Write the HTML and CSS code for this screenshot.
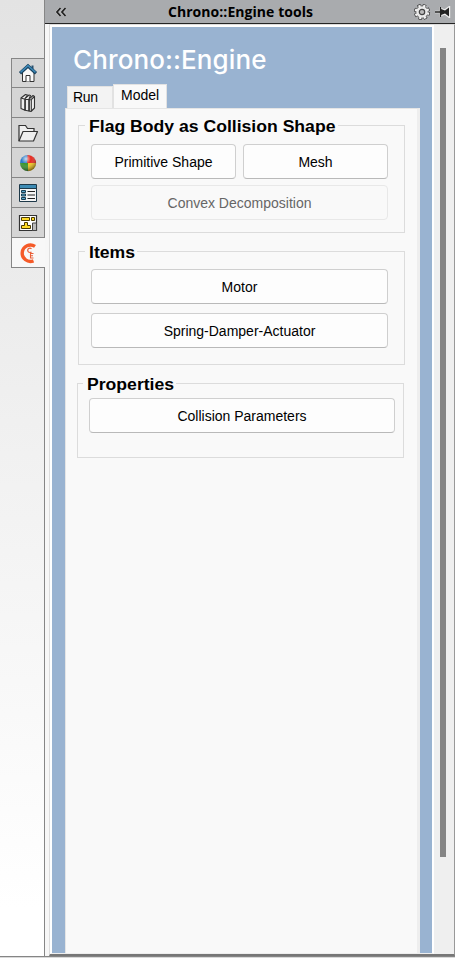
FILE: index.html
```html
<!DOCTYPE html>
<html lang="en">
<head>
<meta charset="utf-8">
<title>Chrono::Engine tools</title>
<link rel="stylesheet" href="styles.css">
</head>
<body>
<div class="window">
  <nav class="rail">
    <div class="rail-item"><svg width="20" height="20" viewBox="0 0 20 20"><path d="M4.500 9v9.500h11.500V9L10 4z" fill="#f8f8f8" stroke="#333"/><path d="M8 18.500v-6h4v6" fill="#fff" stroke="#333"/><path d="M13.500 2.500h2v4h-2z" fill="#2a5270"/><path d="M2 10.200 10 3l8 7.200" fill="none" stroke="#173f5c" stroke-width="3.200"/><path d="M2.500 9.300 10 2.600l7.500 6.700" fill="none" stroke="#3c86b4" stroke-width="1.600"/></svg></div>
    <div class="rail-item"><svg width="20" height="20" viewBox="0 0 20 20"><g fill="#eee" stroke="#333" stroke-width="1.100" stroke-linejoin="round"><path d="M11 6l4-3.500 1.500 1V15L13 18.500l-2-.5z"/><path d="M7 5.500 11 2l1.500.5L11 6v12l-4-.8z"/><path d="M3 5 7.500 1.500 9.500 2 7 5.500v11.700L3 15.500z"/><path d="M3 5l4 1.200 4 .3 2.500.5M7 5.500V17M11 6v12M13.300 6.500V18M13.300 6.500l3.200-3"/></g></svg></div>
    <div class="rail-item"><svg width="22" height="20" viewBox="0 0 22 20"><path d="M2 18V2.500h6.500l2 3H17v3" fill="#eee" stroke="#333" stroke-width="1.200"/><path d="M2 18 6 8.500h14.500L16.500 18z" fill="#eee" stroke="#333" stroke-width="1.200" stroke-linejoin="round"/></svg></div>
    <div class="rail-item"><svg width="20" height="20" viewBox="0 0 20 20"><defs><radialGradient id="shine" cx=".38" cy=".25" r=".75"><stop offset="0" stop-color="#fff" stop-opacity=".75"/><stop offset=".4" stop-color="#fff" stop-opacity="0"/><stop offset="1" stop-color="#000" stop-opacity=".5"/></radialGradient></defs><path d="M10 10.500 2 10A8 8 0 0 1 10 2z" fill="#2877c4"/><path d="M9 10.500 9.500 2A8 8 0 0 1 18 11z" fill="#e52a20"/><path d="M9 10h9a8 8 0 0 1-8 8z" fill="#f5c51c"/><path d="M10 10v8a8 8 0 0 1-8-8z" fill="#37942c"/><circle cx="10" cy="10" r="8.200" fill="url(#shine)"/></svg></div>
    <div class="rail-item"><svg width="20" height="20" viewBox="0 0 20 20"><path d="M1.500 1.500h17v17h-17z" fill="#f5f5f5" stroke="#1e3949"/><path d="M2 2h16v3H2z" fill="#3d8bb4"/><path d="M1 5.500h18" stroke="#1e3949"/><path d="M3.500 7.500h4v2h-4zM3.500 11h4v2h-4zM3.500 14.500h4v2h-4z" fill="#58a5ca" stroke="#173c50"/><path d="M9.500 8.500H17M9.500 12H17M9.500 15.500H17" stroke="#222" stroke-width="1.200"/></svg></div>
    <div class="rail-item"><svg width="20" height="20" viewBox="0 0 20 20"><path d="M1.500 2.500h17v15h-17z" fill="#fff" stroke="#333" stroke-width="1.200"/><path d="M3.500 4.500h8v3h-8zM13.500 4.500h3v3h-3zM6.500 9.500h3v3h3v3h-9v-3h3z" fill="#ffdb27" stroke="#4b3b00"/><path d="M14.500 10h4v7.500h-4z" fill="#bbb" stroke="#444"/></svg></div>
    <div class="rail-item rail-active"><svg width="20" height="22" viewBox="0 0 20 22"><path d="M16 4.400A8.200 8.200 0 1 0 14.500 18.800" fill="none" stroke="#f55a28" stroke-width="3.400"/><path d="M12.500 6.800a2.200 2.200 0 1 0 0 3" fill="none" stroke="#e95f38" stroke-width="1.200"/><path d="M14.500 11.500H11.500v4.500h3M11.500 13.800h2.500" fill="none" stroke="#e95f38" stroke-width="1.100"/></svg></div>
  </nav>
  <main class="dock">
    <header class="titlebar">
      <svg class="collapse" width="12" height="10" viewBox="0 0 12 10"><path d="M5.500 1 2 5l3.500 4M10.500 1 7 5l3.500 4" fill="none" stroke="#eee" stroke-width="3" opacity=".35"/><path d="M5.500 1 2 5l3.500 4M10.500 1 7 5l3.500 4" fill="none" stroke="#222" stroke-width="1.800"/></svg>
      <h1 class="title">Chrono::Engine tools</h1>
      <svg class="gear" width="18" height="18" viewBox="0 0 18 18"><circle cx="9" cy="9" r="6.500" fill="none" stroke="#333" stroke-width="3.200" stroke-dasharray="3.100 2.005"/><circle cx="9" cy="9" r="6.200" fill="#e9e9e9" stroke="#444" stroke-width=".8"/><circle cx="9" cy="9" r="6.300" fill="none" stroke="#f2f2f2" stroke-width="2.200" stroke-dasharray="2.200 2.748" stroke-dashoffset="-.5"/><circle cx="9" cy="9" r="2.700" fill="#bbb" stroke="#444" stroke-width="1.200"/></svg>
      <svg class="pin" width="18" height="12" viewBox="0 0 18 12"><path d="M1 6h6M6.500 1v10M7 3l4 1.500 4-3v9l-4-3L7 9z" fill="#222" stroke="#eee" stroke-width="2.400"/><path d="M1 6h6M6.500 1v10" stroke="#222" stroke-width="1.400"/><path d="M7 3l4 1.500 4-3v9l-4-3L7 9z" fill="#222"/></svg>
    </header>
    <div class="content">
      <div class="panel">
        <h2 class="brand">Chrono::Engine</h2>
        <div class="tabs"><div class="tab">Run</div><div class="tab tab-active">Model</div></div>
        <div class="page">
          <section class="group flags">
            <h3 class="legend"><span>Flag Body as Collision Shape</span></h3>
            <div class="row"><button>Primitive Shape</button><button>Mesh</button></div>
            <button disabled>Convex Decomposition</button>
          </section>
          <section class="group items">
            <h3 class="legend"><span>Items</span></h3>
            <button>Motor</button>
            <button>Spring-Damper-Actuator</button>
          </section>
          <section class="group properties">
            <h3 class="legend"><span>Properties</span></h3>
            <button>Collision Parameters</button>
          </section>
        </div>
      </div>
      <div class="scroll"><div class="thumb"></div></div>
    </div>
  </main>
</div>
</body>
</html>
```
FILE: styles.css
```css
* { box-sizing: border-box; }
body { margin: 0; background: #d9d9d9; }
.window {
  display: flex;
  width: 455px;
  height: 957px;
  border-bottom: 1px solid #858585;
  font-family: "Liberation Sans", sans-serif;
  color: #000;
}
.rail {
  width: 45px;
  padding: 58px 0 0 11px;
  background: linear-gradient(#e3e3e3, #fff 95%);
  border-right: 1px solid #868686;
}
.rail-item {
  height: 30px;
  display: flex;
  align-items: center;
  justify-content: center;
  background: #d5d5d5;
  border: 1px solid #868686;
  border-width: 1px 0 0 1px;
}
.rail-item:first-child { height: 29px; }
.rail-active {
  width: 34px;
  height: 31px;
  background: #f8f8f8;
  border-bottom-width: 1px;
}
.dock { width: 410px; display: flex; flex-direction: column; }
.titlebar {
  height: 24px;
  flex: none;
  display: flex;
  align-items: center;
  padding: 0 3px 0 10px;
  background: #a9abae;
  border-bottom: 1px solid #242424;
}
.title {
  flex: 1;
  margin: 0 0 0 1px;
  text-align: center;
  font: bold 14px/22px "Open Sans", sans-serif;
  letter-spacing: .06px;
}
.gear { margin-right: 3px; }
.content {
  flex: 1;
  min-height: 0;
  display: flex;
  margin-left: 4px;
  border: 1px solid #ddd;
  border-right-color: #999;
  border-bottom: 2px solid #777;
  background: #efefef;
  box-shadow: -4px 0 #f7f7f7;
}
.panel {
  width: 384px;
  display: flex;
  flex-direction: column;
  padding: 0 13px;
  border: 2px solid #fff;
  border-bottom: 1px solid #eee;
  background: #99b3d1;
}
.brand {
  margin: 0;
  padding: 15px 0 0 8px;
  height: 57px;
  white-space: nowrap;
  color: #fff;
  font: 500 26px/36px Inter, sans-serif;
  letter-spacing: .12px;
}
.tabs { display: flex; align-items: flex-end; height: 24px; padding-left: 2px; }
.tab {
  width: 46px;
  height: 22px;
  padding-left: 5px;
  font-size: 14px;
  line-height: 21px;
  letter-spacing: -.3px;
  background: #f3f3f3;
  border: 1px solid #e2e2e2;
  border-bottom: 0;
}
.tab-active { width: 54px; height: 24px; padding-left: 7px; letter-spacing: 0; background: #f9f9f9; }
.page {
  flex: 1;
  width: 355px;
  padding: 16px 14px 0 12px;
  background: #f9f9f9;
  border: 1px solid #e5e5e5;
  border-right: 3px solid #eee;
  border-bottom: 0;
}
.group {
  display: flex;
  flex-direction: column;
  width: 327px;
  border: 1px solid #dcdcdc;
}
.flags { height: 108px; padding: 0 16px 0 12px; gap: 6px; }
.items { height: 114px; margin-top: 18px; padding: 0 16px 0 12px; gap: 9px; }
.properties { height: 75px; margin: 18px 0 0 -1px; padding: 0 8px 0 11px; }
.legend {
  align-self: flex-start;
  height: 18px;
  margin: -9px 0 0 -6px;
  padding: 0 3px 0 4px;
  white-space: nowrap;
  font: bold 16px/20px "Liberation Sans", sans-serif;
  background: #f9f9f9;
}
.legend span { display: block; transform: scaleX(1.1); transform-origin: left; }
.flags .legend { width: 253px; margin-bottom: 3px; }
.items .legend { width: 52px; margin-bottom: -1px; }
.properties .legend { width: 93px; margin-bottom: 5px; }
.row { display: flex; gap: 7px; }
button {
  flex: 1 1 0;
  min-height: 35px;
  max-height: 35px;
  padding: 0;
  border: 1px solid #cfcfcf;
  border-bottom-color: #b9b9b9;
  border-radius: 4px;
  background: #fdfdfd;
  color: #000;
  font: 14px "Liberation Sans", sans-serif;
}
.row button { min-width: 0; }
button:disabled { background: #f9f9f9; border-color: #e8e8e8; color: #666; }
.scroll { flex: 1; padding: 23px 0 0 6px; }
.thumb { width: 6px; height: 809px; background: #858585; }
```
